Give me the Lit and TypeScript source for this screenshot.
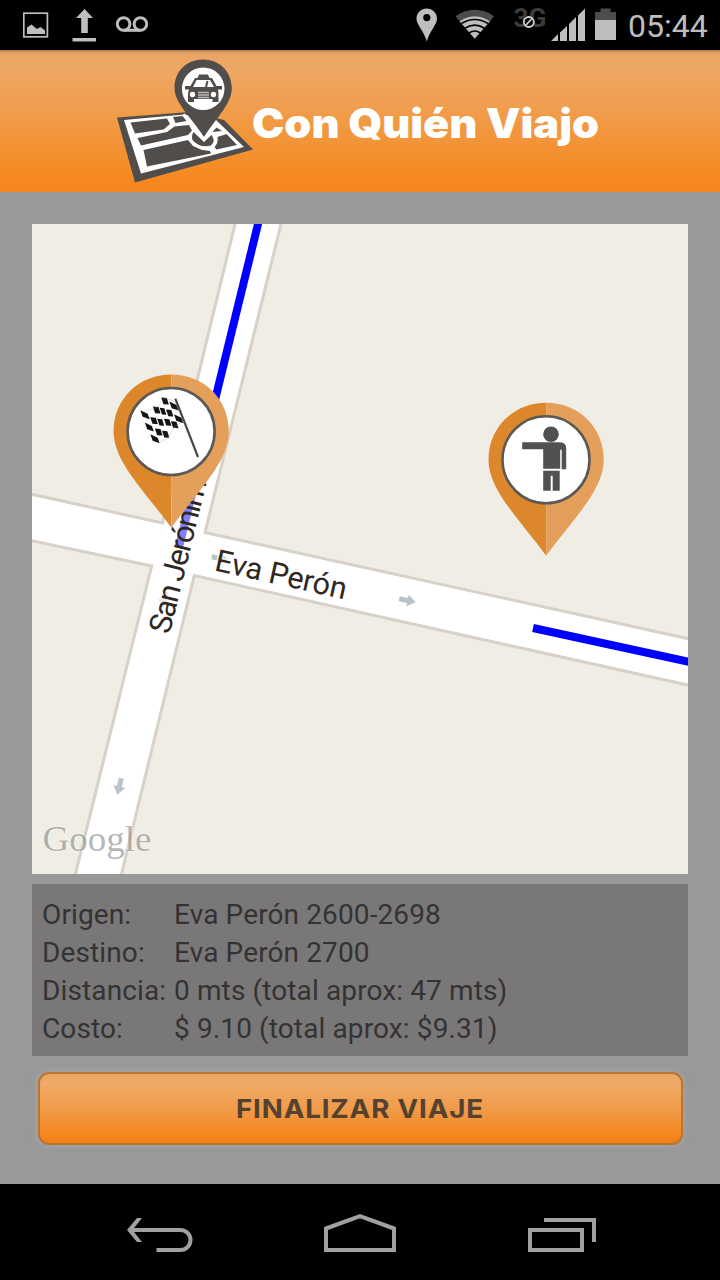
import { LitElement, html, css, svg } from "lit";
import { customElement, property } from "lit/decorators.js";

@customElement("status-bar")
class StatusBar extends LitElement {
  static styles = css`
    :host { display: block; height: 50px; background: #000; }
    .bar { display: flex; height: 50px; justify-content: space-between; }
    .right { display: flex; }
    .clock { width: 92px; box-sizing: border-box; font: 32px/52px Roboto, sans-serif; color: #bebebe; white-space: nowrap; }
    svg { display: block; }
  `;
  render() {
    return html`<div class="bar">
      <svg width="160" height="50" viewBox="0 0 160 50">
        <rect x="23.8" y="13.2" width="23.6" height="23.6" fill="none" stroke="#bebebe" stroke-width="1.7" />
        <path d="M27 34V27.5L31.5 24.5L37 29L40.5 27L45 30.5V34Z" fill="#bebebe" />
        <path d="M84.5 9L93 18H87.8V33H81.2V18H76ZM72.5 38H96V41.5H72.5Z" fill="#bebebe" />
        <g fill="none" stroke="#bebebe" stroke-width="3"><circle cx="123.6" cy="24" r="6.3" /><circle cx="140.4" cy="24" r="6.3" /><path d="M123.6 30.3H140.4" /></g>
      </svg>
      <div class="right">
        <svg width="228" height="50" viewBox="400 0 228 50">
          <path fill-rule="evenodd" d="M426.8 8.5C432.5 8.5 437 13 437 18.5C437 25 430 30 426.8 41.5C423.6 30 416.5 25 416.5 18.5C416.5 13 421 8.5 426.8 8.5ZM426.8 14A3.600 3.600 0 1 0 426.800 21.200A3.600 3.600 0 1 0 426.800 14Z" fill="#bebebe" />
          <path d="M455.500 16.200Q474.700 3.500 494 16.200L490 21.200Q474.700 11.500 459.500 21.200Z" fill="#4c4c4c" />
          <path d="M459.500 21.200Q474.700 11.500 490 21.200L474.700 38.800Z" fill="#bebebe" />
          <g fill="none" stroke="#000" stroke-width="1.600"><path d="M461.500 23.500Q474.700 15.500 488 23.500" /><path d="M465 28.200Q474.700 22 484.500 28.200" /><path d="M469 33Q474.700 29 480.500 33" /></g>
          <text x="513.500" y="27" font-family="Roboto" font-weight="700" font-size="25" textLength="33" lengthAdjust="spacingAndGlyphs" fill="#3b3b3b">3G</text>
          <circle cx="528.800" cy="22" r="5" fill="#000" stroke="#d0d0d0" stroke-width="1.800" /><path d="M525.500 25.500L532 18.500" stroke="#d0d0d0" stroke-width="1.800" />
          <path d="M551 41L558 34V41ZM560 41V32.500L567 26V41ZM569 41V24L576 17V41ZM578 41V15.500L585 8.500V41Z" fill="#bebebe" />
          <path d="M595 12H600.500V8.500H610.500V12H616V20H595Z" fill="#4c4c4c" /><path d="M595 20H616V40H595Z" fill="#bebebe" />
        </svg>
        <div class="clock">05:44</div>
      </div>
    </div>`;
  }
}

@customElement("brand-header")
class BrandHeader extends LitElement {
  static styles = css`
    :host { display: block; height: 142px; background: linear-gradient(#a8733f 0, #d79a60 2px, #e9a664 4px, #eea765 22px, #f09d4c 60px, #f6881f 130px, #f6871e 100%); }
    svg { display: block; }
  `;
  render() {
    return html`<svg width="720" height="142" viewBox="0 50 720 142">
      <path d="M117 117.500L190 112L224 120L253 149.500L135 182.500Z" fill="#514d4b" />
      <path d="M124 120L184 114.500L216 120L244 147L141 173.500Z" fill="#fff" />
      <g fill="#514d4b">
        <path d="M130.500 122.500L167 118.500L170 124L163.500 129.500L135 133.500Z" />
        <path d="M173 117L182.500 116L186.500 121L175.500 123Z" />
        <path d="M137.500 138L167 132L174.500 126.500L189 125L192 130.500L188 135L141 145.500Z" />
        <path d="M143.500 150L188 140L193 146L202 150L210 151L211 153.500L147 166.500Z" />
        <path d="M193.500 132L204 142L211.500 135Q216 141 211 145.500Q200 148.500 192.500 140Q191 136 193.500 132Z" />
        <path d="M216.500 127.500L222 131L212.500 132Z" /><path d="M217.500 137L226.500 134L237 145L216.500 149.500L214.500 147Q218.500 143 217.500 137Z" />
      </g>
      <path d="M203 59.500C219 59.500 231.500 71 231.800 88C232 103 217 117 204 137C191 117 174.500 103 174.500 88C174.500 71 187 59.500 203 59.500Z" fill="#514d4b" />
      <path d="M184 114L204 140L216 122" fill="none" stroke="#fff" stroke-width="2" />
      <circle cx="203.200" cy="88.800" r="21.300" fill="#fff" />
      <g fill="#514d4b"><path d="M199 74.500H208L209.500 78H197.500Z" /><path fill-rule="evenodd" d="M195 78H212L216.500 86H222V89.500H218L218.500 93V102H212.500V99H194V102H188V93L189 89.500H185V86H190.500ZM196.500 80L193 87H214L210 80Z" /></g>
      <path d="M207.500 81L206 87" stroke="#514d4b" stroke-width="2" />
      <circle cx="192.500" cy="94.500" r="2.700" fill="#fff" /><circle cx="213.500" cy="94.500" r="2.700" fill="#fff" />
      <path d="M198 92.500H209M198 95H209M198 97.500H209" stroke="#bbb" stroke-width="1.500" />
      <text x="252" y="138" font-family="Inter, sans-serif" font-weight="900" font-size="41" fill="#fff" textLength="347" lengthAdjust="spacingAndGlyphs">Con Quién Viajo</text>
    </svg>`;
  }
}

// Centre x, centre y and width of every dark square of the chequered flag.
const FLAG_SQUARES = [
  [33, 74, 22], [93, 33, 17], [120, 48, 22], [68, 60, 17], [87, 64, 14], [107, 69, 16],
  [60, 92, 17], [80, 97, 15], [101, 97, 16], [134, 86, 22], [122, 104, 17],
  [46, 111, 21], [74, 126, 17], [95, 133, 16], [63, 146, 22],
];

@customElement("route-map")
class RouteMap extends LitElement {
  static styles = css`:host { display: block; } svg { display: block; }`;

  private pin(x: number, y: number, glyph: unknown) {
    return svg`<g transform="translate(${x} ${y})">
      <path d="M0 -57C-33 -57 -57.700 -32 -57.700 0C-57.700 30 -28 58 0 96Z" fill="#dd872c" />
      <path d="M0 -57C33 -57 57.500 -32 57.500 0C57.500 30 28 58 0 96Z" fill="#e4a05a" />
      <circle r="43.500" cx="-.200" fill="#fff" stroke="#5b5855" stroke-width="2.600" />
      ${glyph}
    </g>`;
  }

  private flag() {
    return svg`<g transform="translate(-37.300 -41.500) scale(.3333)">
      ${FLAG_SQUARES.map(([x, y, w]) => {
        const h = w / 2;
        const skew = w > 20 ? 7 : 1;
        return svg`<path d="M${x - h - 3} ${y - 10 - skew / 2}L${x + h - 3} ${y - 10 + skew}L${x + h + 3} ${y + 10 + skew / 2}L${x - h + 4} ${y + 10 - skew / 2}Z" fill="#161412" />`;
      })}
      <path d="M33 66L68 52L93 24L122 34L148 92L122 110L100 146L74 158" fill="none" stroke="#999" stroke-opacity=".5" stroke-width="2" />
      <path d="M124 26L192 201" stroke="#4a4644" stroke-width="6.500" />
    </g>`;
  }

  render() {
    const arrow = "M-8.500 -2.500H0V-6L8.500 0L0 6V2.500H-8.500Z";
    return html`<svg width="656" height="650" viewBox="32 224 656 650">
      <rect x="32" y="224" width="656" height="650" fill="#f0ede4" />
      <path d="M236 220L162.500 523L28 493.500V540L151.700 566L74 880H120L194.300 575.500L692 686V639.500L205 532.500L282 220Z" fill="#fff" stroke="#d7d1c8" stroke-width="3" />
      <g fill="#bac3cb">
        <path d=${arrow} transform="translate(407.500 600.500) rotate(12)" />
        <path d=${arrow} transform="translate(119.300 786.500) rotate(104)" />
        <path d=${arrow} transform="translate(220 558.500) rotate(12)" />
        <path d=${arrow} transform="translate(164 600) rotate(104)" opacity=".35" />
      </g>
      <g fill="none" stroke="#00f" stroke-width="8"><path d="M259 220L178.800 548" /><path d="M533 628L692 662.500" /></g>
      <g font-family="Roboto, sans-serif" fill="#30271f">
        <path d="M182 550L196.700 490" stroke="#fff" stroke-opacity=".5" stroke-width="16" />
        <text font-size="31" transform="translate(169.500 635) rotate(-76.300)" textLength="174">San Jerónimo</text>
        <text font-size="30.500" transform="translate(213.500 570.300) rotate(12.500)" textLength="134" stroke="#fff" stroke-width="4" stroke-opacity=".6" paint-order="stroke">Eva Perón</text>
      </g>
      ${this.pin(171.300, 431.500, this.flag())}
      ${this.pin(546.200, 459.700, svg`<g fill="#515151">
        <circle cx="4.800" cy="-25.500" r="7.800" />
        <path d="M-24 -17.500H14Q20 -17.500 20 -11V9.500H15.500V-10H14V9H-3V-10.500H-24Z" />
        <path d="M-3 11H13.500V31H6.500V16H4.500V31H-3Z" />
      </g>`)}
      <text x="42.500" y="851" font-family="Liberation Serif, serif" font-size="36" textLength="109" lengthAdjust="spacingAndGlyphs" fill="#777" fill-opacity=".55" stroke="#fff" stroke-opacity=".35" stroke-width="2" paint-order="stroke">Google</text>
    </svg>`;
  }
}

@customElement("trip-info")
class TripInfo extends LitElement {
  @property({ attribute: false }) rows: string[][] = [];
  static styles = css`
    :host { display: block; }
    .box { box-sizing: border-box; height: 172px; padding: 12px 10px 8px; background: #7a7778; display: grid; grid-template-columns: 132px 1fr; grid-auto-rows: 38px; font: 28px/38px Roboto, sans-serif; letter-spacing: .12px; color: #333; white-space: nowrap; }
  `;
  render() {
    return html`<div class="box">${this.rows.map(([k, v]) => html`<span>${k}</span><span>${v}</span>`)}</div>`;
  }
}

@customElement("nav-bar")
class NavBar extends LitElement {
  static styles = css`:host { display: block; height: 96px; background: #000; } svg { display: block; }`;
  render() {
    return html`<svg width="720" height="96" viewBox="0 1184 720 96" fill="none" stroke="#a1a1a1" stroke-width="4">
      <path d="M130 1230H180.500A10 10 0 0 1 180.500 1250H156.500" />
      <path d="M137 1218H142L132.500 1230L142 1242H137L127 1230Z" fill="#a1a1a1" stroke="none" />
      <path d="M326 1250V1228.500L360 1216.200L394 1228.500V1250Z" />
      <path d="M530 1230H582V1250H530ZM544 1220H594V1242" />
    </svg>`;
  }
}

@customElement("app-root")
class AppRoot extends LitElement {
  static styles = css`
    :host { display: flex; flex-direction: column; width: 720px; height: 1280px; background: #999; overflow: hidden; }
    main { flex: 1; padding: 32px 32px 0; display: flex; flex-direction: column; }
    trip-info { margin-top: 10px; }
    .finish { margin: 16px 5px 0 6px; height: 73px; box-sizing: border-box; border: 2px solid #bd762f; border-radius: 11px; padding: 0; background: linear-gradient(#e9a664, #efaa68 14%, #f09b4a 50%, #f6871e 88%, #ef8016); box-shadow: 0 0 4px 2px #a3a3a3; display: block; }
    .finish svg { display: block; }
  `;
  private rows = [
    ["Origen:", "Eva Perón 2600-2698"],
    ["Destino:", "Eva Perón 2700"],
    ["Distancia:", "0 mts (total aprox: 47 mts)"],
    ["Costo:", "$ 9.10 (total aprox: $9.31)"],
  ];
  render() {
    return html`<status-bar></status-bar>
      <brand-header></brand-header>
      <main>
        <route-map></route-map>
        <trip-info .rows=${this.rows}></trip-info>
        <button class="finish"><svg width="641" height="69" viewBox="40 1074 641 69"><text x="236" y="1118" textLength="248" lengthAdjust="spacingAndGlyphs" font-family="Inter, sans-serif" font-weight="700" font-size="26" letter-spacing=".8" fill="#54412f">FINALIZAR VIAJE</text></svg></button>
      </main>
      <nav-bar></nav-bar>`;
  }
}
